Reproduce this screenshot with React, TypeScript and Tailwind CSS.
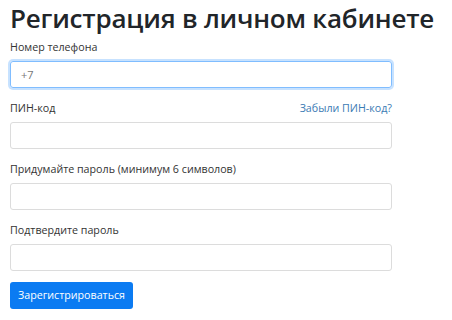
export default function App() {
  return (
    <div className="w-[452px] h-[320px] bg-white overflow-hidden pl-[10px]" style={{ fontFamily: '"Open Sans", "Noto Sans", sans-serif' }}>
      <h1 className="w-max text-[26px] leading-[36px] font-semibold text-[#212529] whitespace-nowrap tracking-[-0.2px]">
        Регистрация в личном кабинете
      </h1>

      <div className="w-[382px]">
        <label className="block text-[10.7px] leading-[16px] text-[#333] mt-[3px]">Номер телефона</label>
        <input
          defaultValue="+7"
          className="mt-[6px] block w-full h-[27px] px-[10px] text-[11px] text-[#777] border border-[#80bdff] rounded-[3px] shadow-[0_0_0_2px_rgba(0,123,255,0.22)] outline-none"
        />

        <div className="flex justify-between items-center mt-[12px] text-[10.7px] leading-[16px]">
          <span className="text-[#333]">ПИН-код</span>
          <a href="#" className="text-[#3b7bb4]">Забыли ПИН-код?</a>
        </div>
        <input className="mt-[6px] block w-full h-[27px] border border-[#dcdcdc] rounded-[3px] outline-none" />

        <label className="block text-[10.7px] leading-[16px] text-[#333] mt-[12px]">Придумайте пароль (минимум 6 символов)</label>
        <input className="mt-[6px] block w-full h-[27px] border border-[#dcdcdc] rounded-[3px] outline-none" />

        <label className="block text-[10.7px] leading-[16px] text-[#333] mt-[12px]">Подтвердите пароль</label>
        <input className="mt-[6px] block w-full h-[27px] border border-[#dcdcdc] rounded-[3px] outline-none" />

        <button className="mt-[11px] h-[27px] w-[123px] bg-[#0b7bf2] text-white text-[10.7px] rounded-[3px]">
          Зарегистрироваться
        </button>
      </div>
    </div>
  );
}
